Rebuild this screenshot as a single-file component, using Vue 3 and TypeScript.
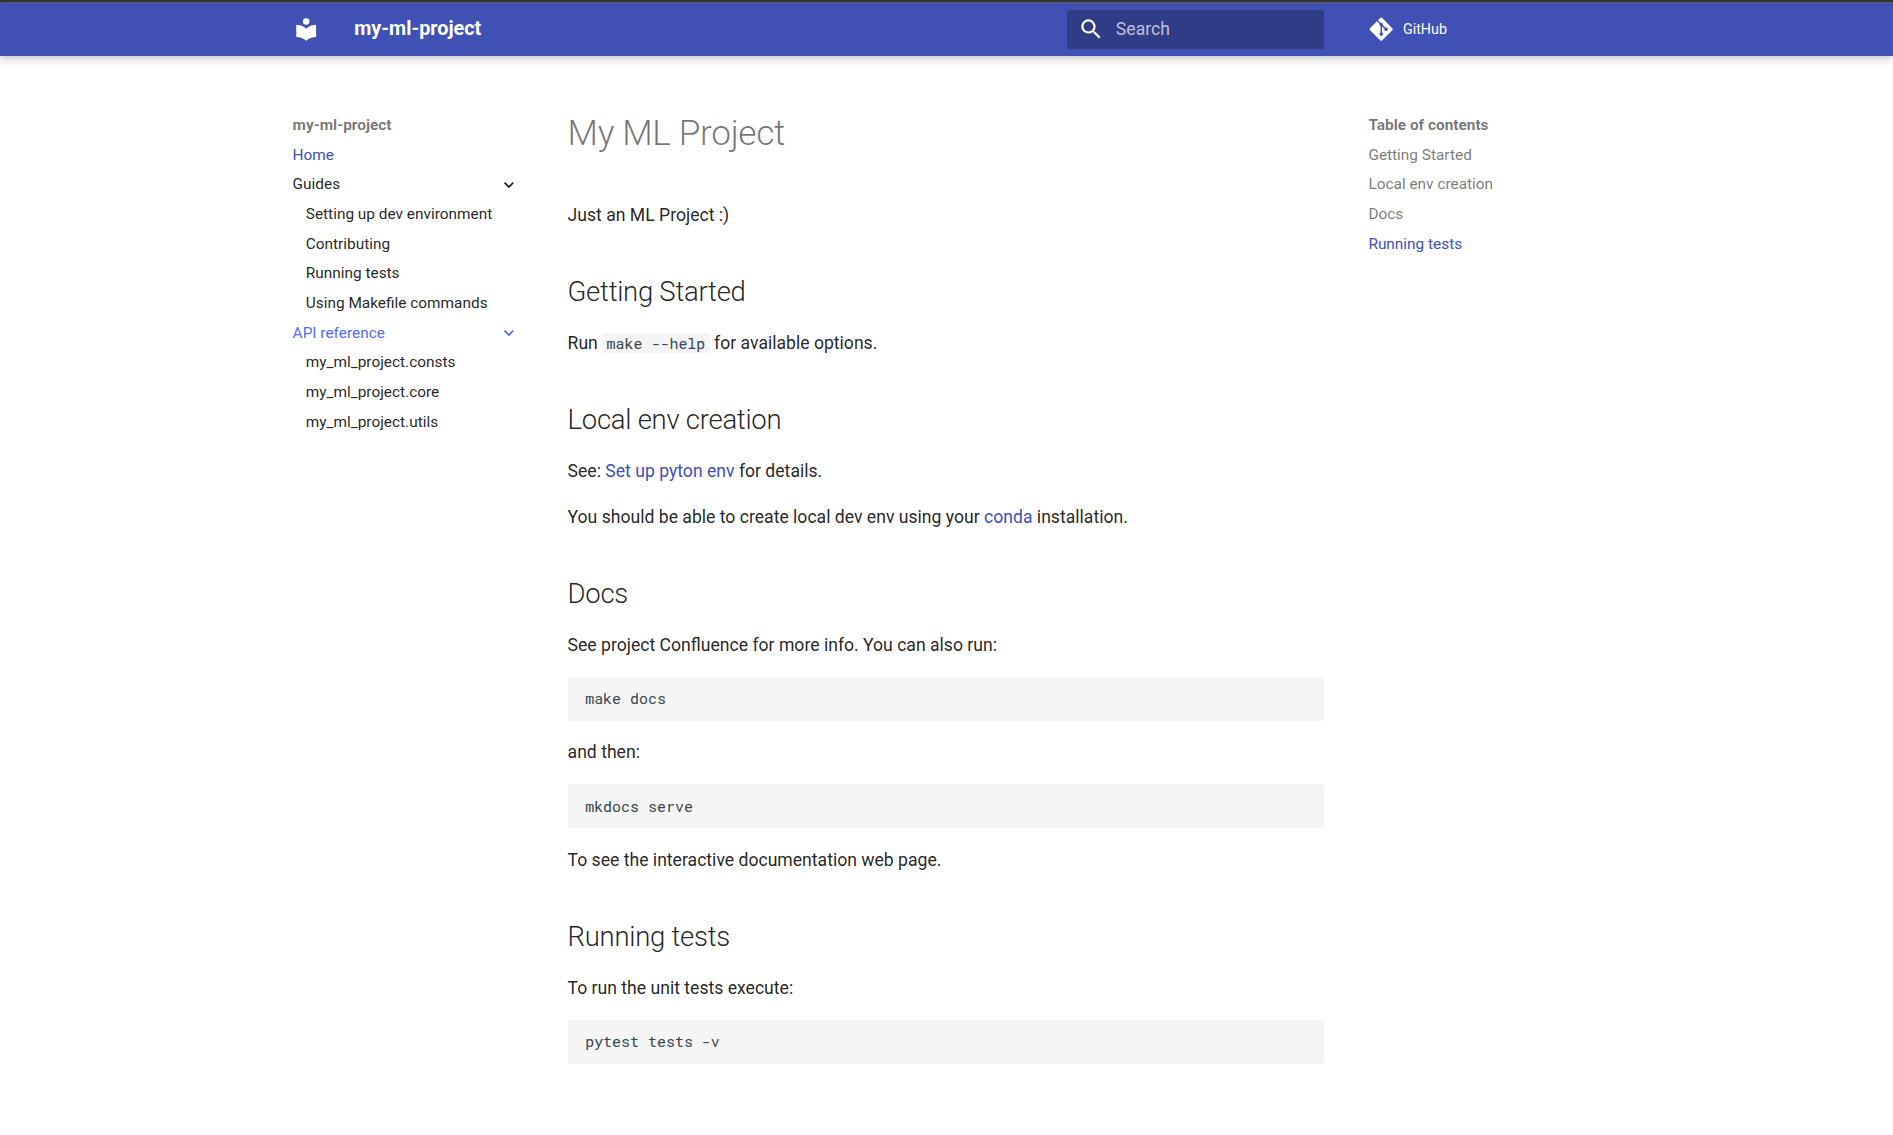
<script setup lang="ts">
interface NavItem {
  title: string
  state?: 'active' | 'hover'
  children?: string[]
}

const nav: NavItem[] = [
  { title: 'Home', state: 'active' },
  {
    title: 'Guides',
    children: ['Setting up dev environment', 'Contributing', 'Running tests', 'Using Makefile commands'],
  },
  {
    title: 'API reference',
    state: 'hover',
    children: ['my_ml_project.consts', 'my_ml_project.core', 'my_ml_project.utils'],
  },
]

const toc: string[] = ['Getting Started', 'Local env creation', 'Docs', 'Running tests']
const currentSection = 'Running tests'
</script>

<template>
  <div class="page">
    <div class="topline"></div>
    <header class="header">
      <div class="header-inner">
        <a class="logo">
          <svg viewBox="0 0 24 24"><path d="M12 8a3 3 0 0 0 3-3 3 3 0 0 0-3-3 3 3 0 0 0-3 3 3 3 0 0 0 3 3m0 3.54C9.64 9.35 6.5 8 3 8v11c3.5 0 6.64 1.35 9 3.54 2.36-2.19 5.5-3.54 9-3.54V8c-3.5 0-6.64 1.35-9 3.54z" /></svg>
        </a>
        <div class="title">my-ml-project</div>
        <div class="search">
          <svg viewBox="0 0 24 24"><path d="M9.5 3A6.5 6.5 0 0 1 16 9.5c0 1.61-.59 3.09-1.56 4.23l.27.27h.79l5 5-1.5 1.5-5-5v-.79l-.27-.27A6.516 6.516 0 0 1 9.5 16 6.5 6.5 0 0 1 3 9.5 6.5 6.5 0 0 1 9.5 3m0 2C7 5 5 7 5 9.5S7 14 9.5 14 14 12 14 9.5 12 5 9.5 5z" /></svg>
          <span>Search</span>
        </div>
        <a class="source">
          <svg viewBox="0 0 448 512"><path d="M439.55 236.05 244 40.45a28.87 28.87 0 0 0-40.81 0l-40.66 40.63 51.52 51.52c27.06-9.14 52.68 16.77 43.39 43.68l49.66 49.66c34.23-11.8 61.18 31 35.47 56.69-26.49 26.49-70.21-2.87-56-37.34L240.22 199v121.85c25.3 12.54 22.26 41.85 9.08 55a34.34 34.34 0 0 1-48.55 0c-17.57-17.6-11.07-46.91 11.25-56v-123c-20.8-8.51-24.6-30.74-18.64-45L142.57 101 8.45 235.14a28.86 28.86 0 0 0 0 40.81l195.61 195.6a28.86 28.86 0 0 0 40.8 0l194.69-194.69a28.86 28.86 0 0 0 0-40.81z" /></svg>
          <span>GitHub</span>
        </a>
      </div>
    </header>

    <div class="main">
      <nav class="sidebar">
        <div class="nav-title">my-ml-project</div>
        <ul>
          <li v-for="item in nav" :key="item.title">
            <a class="nav-link" :class="item.state">
              <span>{{ item.title }}</span>
              <svg v-if="item.children" class="chevron" viewBox="0 0 24 24"><path d="M8.59 16.58 13.17 12 8.59 7.41 10 6l6 6-6 6-1.41-1.42z" /></svg>
            </a>
            <ul v-if="item.children" class="nested">
              <li v-for="child in item.children" :key="child"><a class="nav-link">{{ child }}</a></li>
            </ul>
          </li>
        </ul>
      </nav>

      <article class="content">
        <h1>My ML Project</h1>
        <p>Just an ML Project :)</p>
        <h2>Getting Started</h2>
        <p>Run <code>make --help</code> for available options.</p>
        <h2>Local env creation</h2>
        <p>See: <a>Set up pyton env</a> for details.</p>
        <p>You should be able to create local dev env using your <a>conda</a> installation.</p>
        <h2>Docs</h2>
        <p>See project Confluence for more info. You can also run:</p>
        <pre><code>make docs</code></pre>
        <p>and then:</p>
        <pre><code>mkdocs serve</code></pre>
        <p>To see the interactive documentation web page.</p>
        <h2>Running tests</h2>
        <p>To run the unit tests execute:</p>
        <pre><code>pytest tests -v</code></pre>
      </article>

      <nav class="sidebar toc">
        <div class="nav-title">Table of contents</div>
        <ul>
          <li v-for="entry in toc" :key="entry">
            <a class="nav-link" :class="{ active: entry === currentSection }">{{ entry }}</a>
          </li>
        </ul>
      </nav>
    </div>
  </div>
</template>

<style>
html {
  font-size: 22px;
}
body {
  background: #fff;
}
</style>

<style scoped>
.page {
  min-height: 1135px;
  color: rgba(0, 0, 0, 0.87);
  font-family: Roboto, 'Liberation Sans', sans-serif;
  -webkit-font-smoothing: antialiased;
}
.topline {
  box-sizing: border-box;
  height: 3px;
  background: #333;
  border-bottom: 1px solid #64645f;
}
.header {
  height: 2.4rem;
  background: #4051b5;
  color: #fff;
  box-shadow: 0 0 0.2rem #0000001a, 0 0.2rem 0.4rem #0003;
}
.header-inner,
.main {
  box-sizing: border-box;
  width: 61rem;
  margin: 0 auto 0 calc(50% - 30.5rem - 0.5px);
  display: flex;
}
.header-inner {
  height: 100%;
  align-items: center;
  padding: 0 0.2rem;
}
svg {
  display: block;
  fill: currentColor;
  width: 1.2rem;
  height: 1.2rem;
  flex: none;
}
.logo {
  margin: 0.2rem;
  padding: 0.4rem;
}
.title {
  flex: 1;
  margin-left: 1rem;
  font-size: 0.9rem;
  font-weight: 700;
  line-height: 2.4rem;
}
.search {
  box-sizing: border-box;
  width: 11.7rem;
  height: 1.8rem;
  padding-left: 0.5rem;
  display: flex;
  align-items: center;
  gap: 0.52rem;
  border-radius: 0.1rem;
  background: #00000042;
  font-size: 0.8rem;
}
.search span {
  color: #ffffffb3;
}
.source {
  box-sizing: border-box;
  width: 11.7rem;
  margin-left: 1.4rem;
  padding-left: 0.6rem;
  display: flex;
  align-items: center;
  gap: 0.37rem;
  font-size: 0.65rem;
}
.main {
  margin-top: 1.5rem;
  align-items: flex-start;
}
.sidebar {
  box-sizing: border-box;
  width: 12.1rem;
  flex: none;
  padding: 1.2rem 1rem 1.2rem 0.8rem;
  font-size: 0.7rem;
  line-height: 1.3;
}
.nav-title {
  font-weight: 700;
  color: rgba(0, 0, 0, 0.54);
}
ul {
  list-style: none;
  margin: 0;
  padding: 0;
}
.nested {
  padding-left: 0.6rem;
}
.nav-link {
  display: flex;
  justify-content: space-between;
  margin-top: 0.625em;
}
.chevron {
  width: 0.9rem;
  height: 0.9rem;
  margin: 0.5px 0 -0.5px;
  transform: rotate(90deg);
}
.toc .nav-link {
  color: rgba(0, 0, 0, 0.54);
}
.nav-link.active,
.toc .nav-link.active {
  color: #4051b5;
}
.nav-link.hover {
  color: #526cfe;
}
.content {
  flex: 1;
  margin: 0 1.2rem;
  padding-top: 1rem;
  font-size: 0.8rem;
  line-height: 1.6;
}
h1 {
  margin: 0 0 1.25em;
  font-size: 2em;
  font-weight: 300;
  line-height: 1.3;
  letter-spacing: -0.01em;
  color: rgba(0, 0, 0, 0.54);
}
h2 {
  margin: 1.6em 0 0.64em;
  font-size: 1.5625em;
  font-weight: 300;
  line-height: 1.4;
  letter-spacing: -0.01em;
}
p {
  margin: 1em 0;
}
.content a {
  color: #4051b5;
}
code {
  padding: 0 0.2941176471em;
  border-radius: 0.1rem;
  background: #f5f5f5;
  color: #36464e;
  font-family: 'Roboto Mono', 'DejaVu Sans Mono', monospace;
  font-size: 0.85em;
}
pre {
  margin: 1em 0;
  line-height: 1.4;
}
pre code {
  display: block;
  padding: 0.7720588235em 1.1764705882em;
}
</style>
